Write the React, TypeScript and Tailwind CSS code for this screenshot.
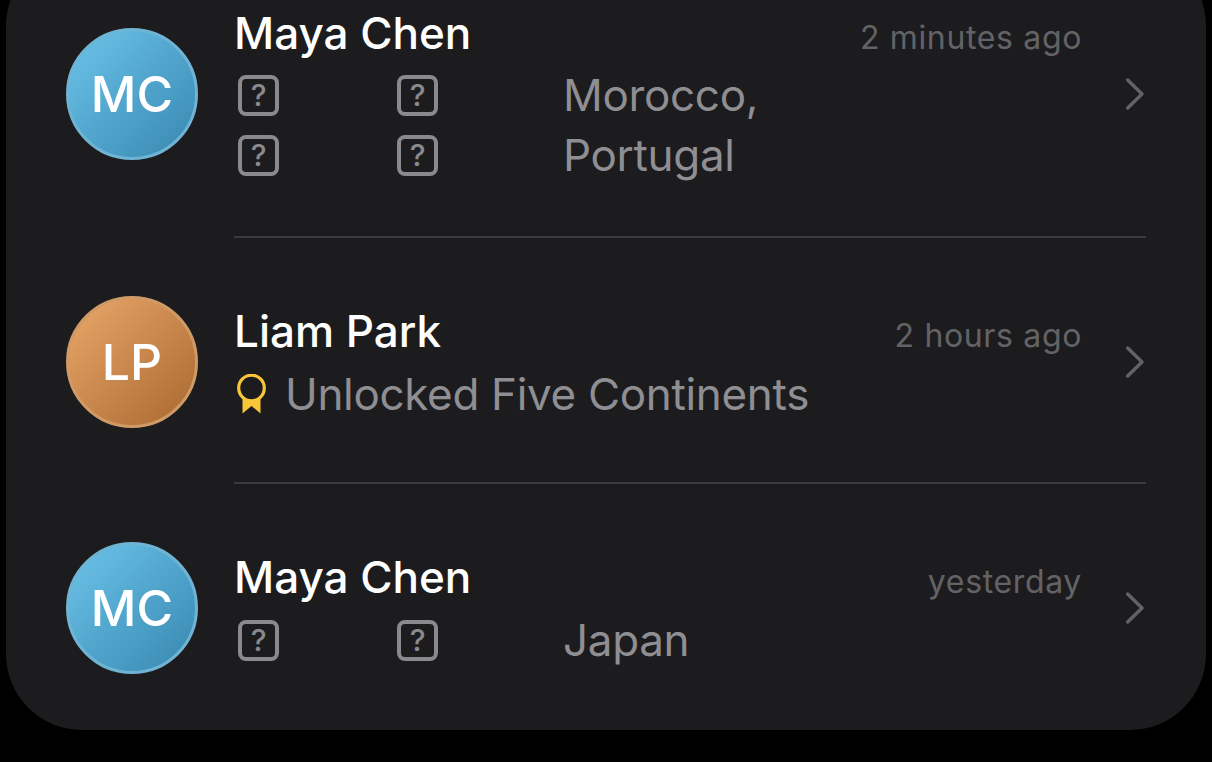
const font = { fontFamily: "Inter, 'Noto Sans', sans-serif" };

function Avatar({ initials, tone, nudge }: { initials: string; tone: "blue" | "orange"; nudge: string }) {
  return (
    <div
      className={
        "flex h-[132px] w-[132px] shrink-0 items-center justify-center rounded-full border-[3px] text-[50px] font-[540] text-white " +
        nudge +
        " " +
        (tone === "blue"
          ? "border-[#6fb4d4] bg-gradient-to-br from-[#6cc4ea] to-[#3788b0]"
          : "border-[#cf9a66] bg-gradient-to-br from-[#eaa86a] to-[#a9682f]")
      }
    >
      {initials}
    </div>
  );
}

function Unknown() {
  return (
    <span className="flex h-[41px] w-[41px] items-center justify-center rounded-[8px] border-4 border-[#8a8a8e] text-[30px] leading-none font-medium text-[#8a8a8e]">
      ?
    </span>
  );
}

function Chevron({ nudge }: { nudge: string }) {
  return (
    <svg width="20" height="32" viewBox="0 0 20 32" fill="none" className={"ml-[44px] shrink-0 " + nudge}>
      <path d="M1.7 2 L16 16 L1.7 30" stroke="#636366" strokeWidth="3.4" strokeLinecap="round" strokeLinejoin="round" />
    </svg>
  );
}

function Ribbon() {
  return (
    <svg width="30" height="40" viewBox="0 0 30 40" fill="none" className="shrink-0">
      <path d="M5.5 24 H23.5 V39.5 L14.5 32 L5.5 39.5 Z" fill="#f9c638" />
      <circle cx="14.5" cy="14" r="12.8" fill="#1c1c1e" stroke="#f9c638" strokeWidth="3.2" />
    </svg>
  );
}

function Row({
  initials,
  tone,
  name,
  time,
  children,
  border,
  pad,
  gap,
  avatarNudge,
  chevronNudge,
}: {
  initials: string;
  tone: "blue" | "orange";
  name: string;
  time: string;
  children: React.ReactNode;
  border: string;
  pad: string;
  gap: string;
  avatarNudge: string;
  chevronNudge: string;
}) {
  return (
    <div className="flex items-center gap-[36px] pl-[60px] pr-[60px]">
      <Avatar initials={initials} tone={tone} nudge={avatarNudge} />
      <div className={"flex min-w-0 flex-1 items-center " + border}>
        <div className={"min-w-0 flex-1 " + pad}>
          <div className="flex items-baseline justify-between">
            <span className="text-[44px] leading-[52px] font-[540] text-white">{name}</span>
            <span className="text-[32px] leading-[40px] tracking-[0.65px] text-[#636366]">{time}</span>
          </div>
          <div className={gap}>{children}</div>
        </div>
        <Chevron nudge={chevronNudge} />
      </div>
    </div>
  );
}

function Place({ rows }: { rows: string[] }) {
  return (
    <div className="grid grid-cols-[159px_166px_1fr] pl-[4px] text-[44px] leading-[60px] tracking-[-0.33px] text-[#8e8e93]">
      {rows.map((r) => (
        <div key={r} className="contents">
          <div className="flex h-[60px] items-center"><Unknown /></div>
          <div className="flex h-[60px] items-center"><Unknown /></div>
          <div>{r}</div>
        </div>
      ))}
    </div>
  );
}

export default function App() {
  return (
    <div className="flex h-[762px] w-[1212px] flex-col justify-end overflow-hidden bg-black px-[6px] pb-[32px]" style={font}>
      <div className="w-full shrink-0 rounded-[76px] bg-[#1c1c1e]">
        <Row initials="MC" tone="blue" name="Maya Chen" time="2 minutes ago" border="border-b-2 border-[#3a3a3c]" pad="pt-[57px] pb-[51px]" gap="mt-[6px]" avatarNudge="" chevronNudge="mt-[2px]">
          <Place rows={["Morocco,", "Portugal"]} />
        </Row>
        <Row initials="LP" tone="orange" name="Liam Park" time="2 hours ago" border="border-b-2 border-[#3a3a3c]" pad="pt-[67px] pb-[58px]" gap="mt-[7px]" avatarNudge="mt-[2px]" chevronNudge="mt-[4px]">
          <div className="flex items-center gap-[18px] pl-[3px] text-[44px] leading-[60px] tracking-[-0.33px] text-[#8e8e93]">
            <Ribbon />
            <span>Unlocked Five Continents</span>
          </div>
        </Row>
        <Row initials="MC" tone="blue" name="Maya Chen" time="yesterday" border="" pad="pt-[67px] pb-[60px]" gap="mt-[7px]" avatarNudge="mt-[2px]" chevronNudge="mt-[2px]">
          <Place rows={["Japan"]} />
        </Row>
      </div>
    </div>
  );
}
